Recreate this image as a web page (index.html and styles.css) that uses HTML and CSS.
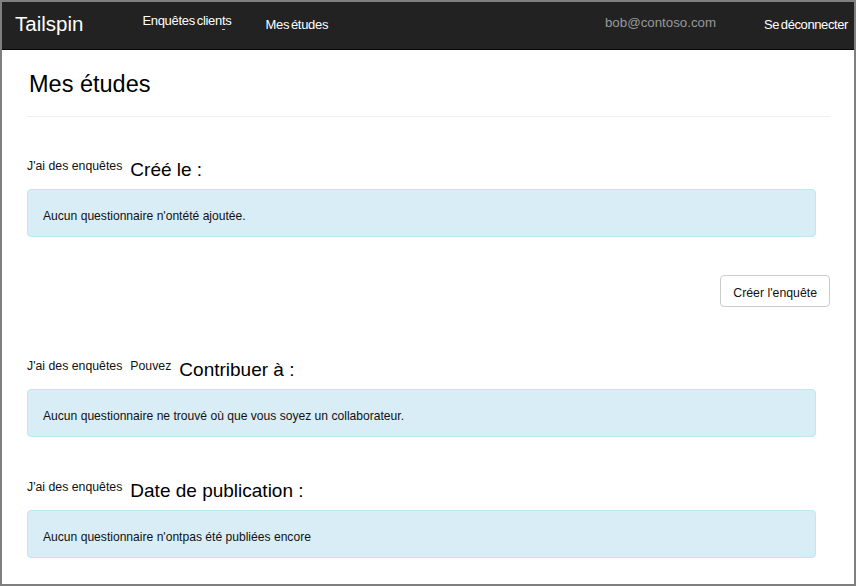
FILE: index.html
```html
<!DOCTYPE html>
<html lang="fr">
<head>
<meta charset="utf-8">
<title>Tailspin - Mes études</title>
<link rel="stylesheet" href="styles.css">
</head>
<body>
<div class="frame">
  <header class="navbar">
    <div class="brand">Tailspin</div>
    <div class="nav-item dropdown">
      <span class="nav-text">Enquêtes clients</span>
      <span class="caret"></span>
    </div>
    <div class="nav-item studies"><span class="nav-text">Mes études</span></div>
    <div class="user">bob@contoso.com</div>
    <div class="nav-item logout"><span class="nav-text">Se déconnecter</span></div>
  </header>
  <main class="container">
    <h1 class="page-title">Mes études</h1>
    <hr class="divider">

    <section class="section section-first">
      <div class="heading-row">
        <span class="small">J'ai des enquêtes</span>
        <span class="title">Créé le :</span>
      </div>
      <div class="alert">Aucun questionnaire n'ontété ajoutée.</div>
    </section>

    <div class="actions">
      <button class="btn" type="button">Créer l'enquête</button>
    </div>

    <section class="section section-after-actions">
      <div class="heading-row">
        <span class="small">J'ai des enquêtes</span>
        <span class="small">Pouvez</span>
        <span class="title">Contribuer à :</span>
      </div>
      <div class="alert">Aucun questionnaire ne trouvé où que vous soyez un collaborateur.</div>
    </section>

    <section class="section">
      <div class="heading-row">
        <span class="small">J'ai des enquêtes</span>
        <span class="title">Date de publication :</span>
      </div>
      <div class="alert">Aucun questionnaire n'ontpas été publiées encore</div>
    </section>
  </main>
</div>
</body>
</html>
```

FILE: styles.css
```css
html, body {
  margin: 0;
  padding: 0;
  background: #ffffff;
}

.frame {
  width: 856px;
  height: 586px;
  box-sizing: border-box;
  border: 2px solid #7f7f7f;
  overflow: hidden;
  font-family: "Liberation Sans", Arial, sans-serif;
  color: #111;
  background: #fff;
}

.navbar {
  height: 47px;
  background: #222222;
  border-bottom: 1px solid #080808;
  display: flex;
  align-items: flex-start;
  padding-left: 13px;
}

.brand {
  color: #fff;
  font-size: 20.5px;
  line-height: 22px;
  margin-top: 11px;
}

.nav-item {
  color: #fff;
  font-size: 13px;
  line-height: 15px;
}

.nav-text {
  letter-spacing: -0.3px;
  word-spacing: -1.5px;
}

.dropdown {
  margin-left: 59px;
  margin-top: 11px;
  display: flex;
  flex-direction: column;
  align-items: flex-end;
}

.caret {
  width: 3px;
  height: 1px;
  background: #bbbbbb;
  margin-top: 1px;
  margin-right: 6px;
}

.studies {
  margin-left: 34px;
  margin-top: 15px;
}

.user {
  margin-left: auto;
  margin-top: 13px;
  color: #999999;
  font-size: 13.3px;
  line-height: 15px;
}

.logout {
  margin-left: 48px;
  margin-top: 15px;
  margin-right: 6px;
}

.logout .nav-text {
  letter-spacing: -0.4px;
}

.container {
  padding: 0 24px 0 25px;
}

.page-title {
  margin: 20px 0 0 0;
  padding-left: 2px;
  font-size: 23.5px;
  line-height: 28px;
  font-weight: normal;
  color: #000;
}

.divider {
  margin: 18px 0 0 0;
  border: 0;
  border-top: 1px solid #eeeeee;
  height: 0;
}

.section {
  margin-top: 43px;
}

.section-first {
  margin-top: 42px;
}

.section-after-actions {
  margin-top: 52px;
}

.heading-row {
  display: flex;
  align-items: flex-start;
  gap: 8px;
  height: 21px;
  margin-bottom: 9px;
}

.small {
  font-size: 12.3px;
  line-height: 14px;
  color: #111;
}

.title {
  font-size: 19px;
  line-height: 21px;
  color: #000;
}

.alert {
  margin-right: 14px;
  padding: 18px 15px 12px 15px;
  border: 1px solid #bce8f1;
  background: #d9edf7;
  border-radius: 4px;
  font-size: 12.1px;
  line-height: 16px;
  color: #111;
}

.actions {
  display: flex;
  justify-content: flex-end;
  margin-top: 38px;
}

.btn {
  box-sizing: border-box;
  height: 32px;
  font-family: "Liberation Sans", Arial, sans-serif;
  font-size: 12.3px;
  line-height: 18px;
  padding: 8px 12px 4px 12px;
  border: 1px solid #cccccc;
  border-radius: 4px;
  background: #ffffff;
  color: #111;
  margin: 0;
}
```
